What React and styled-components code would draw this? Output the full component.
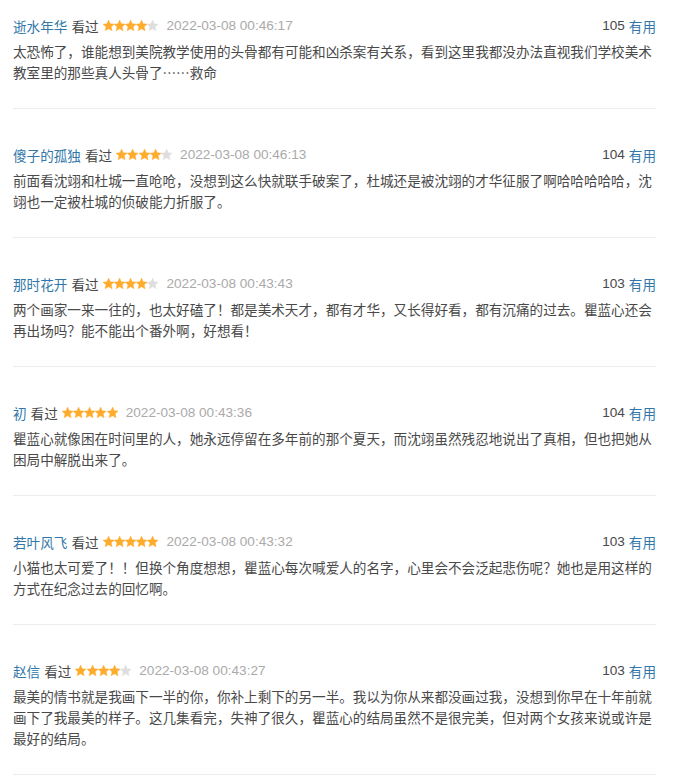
import React from "react";
import styled, { createGlobalStyle } from "styled-components";

const GlobalStyle = createGlobalStyle`
  html, body { margin: 0; padding: 0; background: #fff; }
  body { font-family: "Liberation Sans", Arial, "Noto Sans CJK SC", sans-serif; }
`;

const List = styled.div`
  width: 643px;
  margin-left: 13px;
`;

const Item = styled.div`
  padding: 36px 0 25px;
  border-bottom: 1px solid #ececec;
  &:first-child { padding-top: 16px; }
`;

const Header = styled.div`
  display: flex;
  align-items: center;
  height: 20px;
  font-size: 13.6px;
  line-height: 20px;
`;

const Meta = styled.div`
  display: flex;
  align-items: center;
  flex: 1;
`;

const Link = styled.span`
  color: #3377aa;
  font-family: "Noto Sans CJK SC", sans-serif;
`;

const Watched = styled.span`
  color: #494949;
  margin-left: 4px;
  font-family: "Noto Sans CJK SC", sans-serif;
`;

const Stars = styled.span`
  display: inline-flex;
  margin-left: 4px;
`;

const Time = styled.span`
  color: #aaa;
  margin-left: 8px;
`;

const Votes = styled.div`
  color: #494949;
  display: flex;
  align-items: center;
  gap: 4px;
`;

const Content = styled.p`
  margin: 5px 0 0;
  font-size: 13.6px;
  line-height: 21px;
  color: #494949;
  font-family: "Noto Sans CJK SC", sans-serif;
`;

const Star = ({ on }) => (
  <svg width="11.2" height="11.2" viewBox="0.2 0.2 9.6 9.6">
    <path
      d="M5 0.3 L6.4 3.4 L9.8 3.75 L7.25 6.05 L8 9.5 L5 7.75 L2 9.5 L2.75 6.05 L0.2 3.75 L3.6 3.4 Z"
      fill={on ? "#ffac2d" : "#dedede"}
      stroke={on ? "#ffac2d" : "#dedede"}
      strokeWidth="0.35"
      strokeLinejoin="round"
    />
  </svg>
);

const data = [
  {
    name: "逝水年华",
    stars: 4,
    time: "2022-03-08 00:46:17",
    votes: 105,
    text: "太恐怖了，谁能想到美院教学使用的头骨都有可能和凶杀案有关系，看到这里我都没办法直视我们学校美术教室里的那些真人头骨了……救命",
  },
  {
    name: "傻子的孤独",
    stars: 4,
    time: "2022-03-08 00:46:13",
    votes: 104,
    text: "前面看沈翊和杜城一直呛呛，没想到这么快就联手破案了，杜城还是被沈翊的才华征服了啊哈哈哈哈哈，沈翊也一定被杜城的侦破能力折服了。",
  },
  {
    name: "那时花开",
    stars: 4,
    time: "2022-03-08 00:43:43",
    votes: 103,
    text: "两个画家一来一往的，也太好磕了！都是美术天才，都有才华，又长得好看，都有沉痛的过去。瞿蓝心还会再出场吗？能不能出个番外啊，好想看！",
  },
  {
    name: "初",
    stars: 5,
    time: "2022-03-08 00:43:36",
    votes: 104,
    text: "瞿蓝心就像困在时间里的人，她永远停留在多年前的那个夏天，而沈翊虽然残忍地说出了真相，但也把她从困局中解脱出来了。",
  },
  {
    name: "若叶风飞",
    stars: 5,
    time: "2022-03-08 00:43:32",
    votes: 103,
    text: "小猫也太可爱了！！但换个角度想想，瞿蓝心每次喊爱人的名字，心里会不会泛起悲伤呢？她也是用这样的方式在纪念过去的回忆啊。",
  },
  {
    name: "赵信",
    stars: 4,
    time: "2022-03-08 00:43:27",
    votes: 103,
    text: "最美的情书就是我画下一半的你，你补上剩下的另一半。我以为你从来都没画过我，没想到你早在十年前就画下了我最美的样子。这几集看完，失神了很久，瞿蓝心的结局虽然不是很完美，但对两个女孩来说或许是最好的结局。",
  },
];

export default function App() {
  return (
    <>
      <GlobalStyle />
      <List>
        {data.map((c, i) => (
          <Item key={i}>
            <Header>
              <Meta>
                <Link>{c.name}</Link>
                <Watched>看过</Watched>
                <Stars>
                  {[0, 1, 2, 3, 4].map((s) => (
                    <Star key={s} on={s < c.stars} />
                  ))}
                </Stars>
                <Time>{c.time}</Time>
              </Meta>
              <Votes>
                <span>{c.votes}</span>
                <Link>有用</Link>
              </Votes>
            </Header>
            <Content>{c.text}</Content>
          </Item>
        ))}
      </List>
    </>
  );
}
